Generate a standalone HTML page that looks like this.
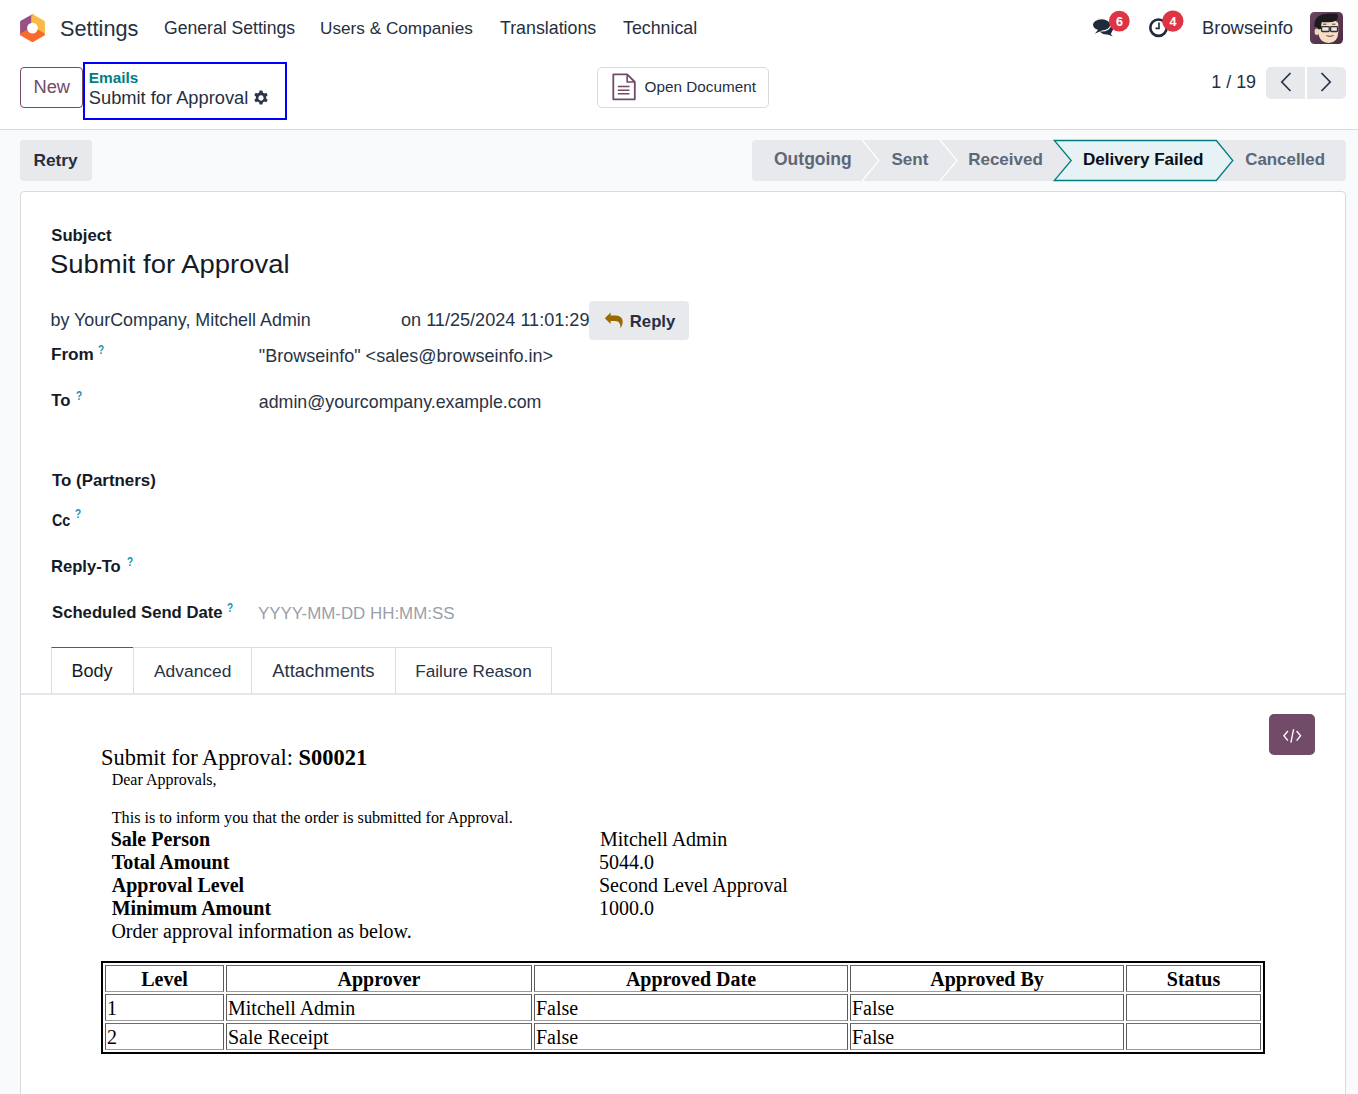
<!DOCTYPE html>
<html><head><meta charset="utf-8"><title>Emails - Submit for Approval</title>
<style>
html,body{margin:0;padding:0}
body{width:1358px;height:1094px;overflow:hidden;position:relative;background:#f9fafb;font-family:"Liberation Sans",sans-serif}
.t{position:absolute;white-space:pre;line-height:normal}
.r{position:absolute;box-sizing:border-box}
svg{position:absolute;overflow:visible}
table th,table td{border:1px solid #5a5a5a;border-top-color:#6e6e6e;border-bottom-color:#9c9c9c;padding:2px 1px 0 1px;box-sizing:border-box;height:27px;line-height:normal;vertical-align:middle}
table th{text-align:center;font-weight:700}
table td{text-align:left}
</style></head><body>
<div class="r" style="left:0;top:0;width:1358px;height:129px;background:#fff"></div>
<div class="r" style="left:0;top:129px;width:1358px;height:1px;background:#d9dadf"></div>
<!-- logo -->
<svg style="left:0;top:0" width="60" height="50" viewBox="0 0 60 50">
  <g stroke-linejoin="round" stroke-width="2.6">
  <path d="M32.5 15.6 L21.4 22 L21.4 34.2 L32.5 28 Z" fill="#985184" stroke="#985184"/>
  <path d="M32.5 15.6 L43.6 22 L43.6 34.2 L32.5 28 Z" fill="#fbb945" stroke="#fbb945"/>
  <path d="M21.4 34.4 L32.5 40.8 L43.6 34.4 L32.5 28 Z" fill="#fa6a2b" stroke="#fa6a2b"/>
  </g>
  <circle cx="32.5" cy="28.1" r="5.4" fill="#fff"/>
</svg>
<!-- chat icon -->
<svg style="left:0;top:0" width="1358" height="50" viewBox="0 0 1358 50">
  <path d="M1097.5 25 Q1103 20.5 1111 21.5 Q1116 23 1114 29 Q1112.5 32 1111.5 34 L1114.8 37.5 L1107.2 35 Q1101 35.2 1099 31 Z" fill="#1f2a3a" stroke="#fff" stroke-width="1.2"/>
  <ellipse cx="1101.6" cy="24.8" rx="9.2" ry="6.2" fill="#1f2a3a" stroke="#fff" stroke-width="1.2"/>
  <path d="M1094.8 33.8 L1098.5 29.2 L1102 30.5 Z" fill="#1f2a3a"/>
  <circle cx="1119.3" cy="21.1" r="10.4" fill="#de3545"/>
  <circle cx="1158.5" cy="27.7" r="8.2" fill="none" stroke="#1f2a3a" stroke-width="2.6"/>
  <path d="M1159 22.5 L1159 28.4 L1155.5 28.4" fill="none" stroke="#1f2a3a" stroke-width="1.6"/>
  <circle cx="1172.9" cy="21.1" r="10.6" fill="#de3545"/>
</svg>
<!-- avatar -->
<svg style="left:1310px;top:12px" width="33" height="32" viewBox="0 0 33 32">
  <defs><linearGradient id="av" x1="0" y1="0" x2="1" y2="1"><stop offset="0" stop-color="#6b4563"/><stop offset="1" stop-color="#4b2b42"/></linearGradient>
  <clipPath id="avc"><rect x="0" y="0" width="33" height="32" rx="4.5"/></clipPath></defs>
  <rect x="0" y="0" width="33" height="32" rx="4.5" fill="url(#av)"/>
  <g clip-path="url(#avc)">
  <ellipse cx="6.8" cy="19.8" rx="2.2" ry="3.3" fill="#f4d3b6"/>
  <path d="M8 9 Q9 7 18 7.5 Q28 8 28.3 12 L28.3 20 Q28 30.5 19 31 Q11 31 9 24 Q7.5 19 8 9 Z" fill="#f8ddc5"/>
  <path d="M4.3 15 Q3.8 5 12 2.6 Q20 1 27.2 1.8 Q28.5 4 27.5 7 Q26 10 19 10.2 Q13 10.4 11.8 10 Q11 13 11 17 L8.6 17.5 Q7.6 14 4.3 15 Z" fill="#1b1b1d"/>
  <path d="M13 12.2 h3.5 M22.2 12.2 h3.2" stroke="#3a302c" stroke-width="0.9"/>
  <rect x="11.6" y="14.6" width="7.6" height="4.9" rx="0.7" fill="#efe6e2" stroke="#333" stroke-width="1.3"/>
  <rect x="20.6" y="14.6" width="6.9" height="4.9" rx="0.7" fill="#efe6e2" stroke="#333" stroke-width="1.3"/>
  <path d="M16.3 23.6 Q20 25.6 23.8 23.4" fill="#b99" stroke="#6e5f5f" stroke-width="1"/>
  </g>
</svg>
<!-- New button -->
<div class="r" style="left:20px;top:67px;width:63px;height:41px;border:1px solid #714b67;border-radius:4px;background:#fff"></div>
<!-- breadcrumb highlight box -->
<div class="r" style="left:83px;top:62px;width:204px;height:58px;border:2px solid #0000ff"></div>
<!-- gear -->
<svg style="left:253px;top:90px" width="16" height="16" viewBox="0 0 16 16">
  <g fill="#2b3547">
  <path d="M6.6 0.5 h2.8 l0.4 2.1 a5.6 5.6 0 0 1 1.5 0.9 l2-0.7 l1.4 2.4 l-1.6 1.4 a5.6 5.6 0 0 1 0 1.8 l1.6 1.4 l-1.4 2.4 l-2-0.7 a5.6 5.6 0 0 1 -1.5 0.9 l-0.4 2.1 h-2.8 l-0.4-2.1 a5.6 5.6 0 0 1 -1.5-0.9 l-2 0.7 l-1.4-2.4 l1.6-1.4 a5.6 5.6 0 0 1 0-1.8 l-1.6-1.4 l1.4-2.4 l2 0.7 a5.6 5.6 0 0 1 1.5-0.9 z M8 5.3 a2.7 2.7 0 1 0 0.001 0 z" fill-rule="evenodd"/>
  </g>
</svg>
<!-- Open Document button -->
<div class="r" style="left:597px;top:67px;width:172px;height:41px;border:1px solid #d8dadd;border-radius:5px;background:#fff"></div>
<svg style="left:0;top:0" width="1358" height="130" viewBox="0 0 1358 130">
  <path d="M613.3 74.4 L627.2 74.4 L634.8 82 L634.8 99.3 L613.3 99.3 Z" fill="none" stroke="#714b67" stroke-width="1.8" stroke-linejoin="round"/>
  <path d="M627.2 74.4 L627.2 82 L634.8 82" fill="none" stroke="#714b67" stroke-width="1.6"/>
  <path d="M617.8 86.5 H629.5 M617.8 90.2 H629.5 M617.8 93.8 H629.5" stroke="#714b67" stroke-width="1.5"/>
</svg>
<!-- pager -->
<div class="r" style="left:1266px;top:67px;width:39px;height:32px;background:#e7e9ed;border-radius:5px 0 0 5px"></div>
<div class="r" style="left:1307px;top:67px;width:39px;height:32px;background:#e7e9ed;border-radius:0 5px 5px 0"></div>
<svg style="left:0;top:0" width="1358" height="130" viewBox="0 0 1358 130">
  <path d="M1290.5 73 L1281.8 82 L1290.5 91" fill="none" stroke="#283548" stroke-width="1.7"/>
  <path d="M1321.5 73 L1330.2 82 L1321.5 91" fill="none" stroke="#283548" stroke-width="1.7"/>
</svg>
<!-- Retry -->
<div class="r" style="left:20px;top:140px;width:72px;height:41px;background:#e7e9ed;border-radius:4px"></div>
<!-- status bar -->
<svg style="left:0;top:0" width="1358" height="200" viewBox="0 0 1358 200">
  <path d="M756 140 H1342 Q1346 140 1346 144 V177 Q1346 181 1342 181 H756 Q752 181 752 177 V144 Q752 140 756 140 Z" fill="#e7e9ed"/>
  <path d="M862 140 L879 160.5 L862 181" fill="none" stroke="#fff" stroke-width="1.2"/>
  <path d="M940 140 L957 160.5 L940 181" fill="none" stroke="#fff" stroke-width="1.2"/>
  <path d="M1054.3 140.5 L1216.3 140.5 L1232.8 160.5 L1216.3 180.5 L1054.3 180.5 L1071.2 160.5 Z" fill="#e6f2f3" stroke="#017e84" stroke-width="1.3"/>
</svg>
<!-- sheet -->
<div class="r" style="left:20px;top:191px;width:1326px;height:1000px;background:#fff;border:1px solid #d8dadd;border-radius:4px"></div>
<!-- reply button -->
<div class="r" style="left:589px;top:301px;width:100px;height:39px;background:#e7e9ed;border-radius:4px"></div>
<svg style="left:0;top:0" width="700" height="400" viewBox="0 0 700 400">
  <path d="M604.8 318.3 L610.6 312.6 L610.6 315.6 L615.5 315.6 C620.5 315.6 623 318.5 622.7 322.5 C622.4 325 621.4 327 620.4 328.3 C620.7 324.5 619.5 321.1 615 321.1 L610.6 321.1 L610.6 324 Z" fill="#9a6a00"/>
</svg>
<!-- tabs -->
<div class="r" style="left:51px;top:647px;width:83px;height:48px;border:1px solid #dcdde1;border-bottom:0;border-top-color:#714b67"></div>
<div class="r" style="left:133px;top:647px;width:119px;height:48px;border:1px solid #dcdde1;border-bottom:0"></div>
<div class="r" style="left:251px;top:647px;width:145px;height:48px;border:1px solid #dcdde1;border-bottom:0"></div>
<div class="r" style="left:395px;top:647px;width:157px;height:48px;border:1px solid #dcdde1;border-bottom:0"></div>
<div class="r" style="left:21px;top:693px;width:1324px;height:2px;background:#e5e7eb"></div>
<!-- code view button -->
<div class="r" style="left:1269px;top:714px;width:46px;height:41px;background:#714b67;border-radius:5px"></div>
<svg style="left:0;top:0" width="1358" height="800" viewBox="0 0 1358 800">
  <path d="M1287.9 731 L1283.9 735.8 L1287.9 740.6 M1296.6 731 L1300.6 735.8 L1296.6 740.6 M1293.6 729.2 L1290.9 742.6" fill="none" stroke="#fff" stroke-width="1.35"/>
</svg>


<div class="t" style="left:60.00px;top:16.00px;font-family:'Liberation Sans',sans-serif;font-weight:400;font-size:21.7px;color:#252f3f;">Settings</div>
<div class="t" style="left:164.00px;top:18.00px;font-family:'Liberation Sans',sans-serif;font-weight:400;font-size:17.6px;color:#252f3f;">General Settings</div>
<div class="t" style="left:320.00px;top:18.00px;font-family:'Liberation Sans',sans-serif;font-weight:400;font-size:17.2px;color:#252f3f;">Users &amp; Companies</div>
<div class="t" style="left:500.00px;top:18.00px;font-family:'Liberation Sans',sans-serif;font-weight:400;font-size:17.8px;color:#252f3f;">Translations</div>
<div class="t" style="left:623.00px;top:18.00px;font-family:'Liberation Sans',sans-serif;font-weight:400;font-size:17.8px;color:#252f3f;">Technical</div>
<div class="t" style="left:1202.00px;top:16.70px;font-family:'Liberation Sans',sans-serif;font-weight:400;font-size:18.4px;color:#252f3f;">Browseinfo</div>
<div class="t" style="left:33.50px;top:76.00px;font-family:'Liberation Sans',sans-serif;font-weight:400;font-size:18.3px;color:#714b67;">New</div>
<div class="t" style="left:88.80px;top:68.80px;font-family:'Liberation Sans',sans-serif;font-weight:700;font-size:15.4px;color:#017e84;">Emails</div>
<div class="t" style="left:88.80px;top:86.80px;font-family:'Liberation Sans',sans-serif;font-weight:400;font-size:18.3px;color:#252f3f;">Submit for Approval</div>
<div class="t" style="left:644.60px;top:78.00px;font-family:'Liberation Sans',sans-serif;font-weight:400;font-size:15.3px;color:#252f3f;">Open Document</div>
<div class="t" style="left:1211.30px;top:72.20px;font-family:'Liberation Sans',sans-serif;font-weight:400;font-size:17.9px;color:#252f3f;">1 / 19</div>
<div class="t" style="left:33.50px;top:150.00px;font-family:'Liberation Sans',sans-serif;font-weight:700;font-size:17.3px;color:#252f3f;">Retry</div>
<div class="t" style="left:774.00px;top:149.30px;font-family:'Liberation Sans',sans-serif;font-weight:700;font-size:17.5px;color:#5d6775;">Outgoing</div>
<div class="t" style="left:891.50px;top:150.30px;font-family:'Liberation Sans',sans-serif;font-weight:700;font-size:17.0px;color:#5d6775;">Sent</div>
<div class="t" style="left:968.20px;top:150.30px;font-family:'Liberation Sans',sans-serif;font-weight:700;font-size:17.0px;color:#5d6775;">Received</div>
<div class="t" style="left:1082.90px;top:150.30px;font-family:'Liberation Sans',sans-serif;font-weight:700;font-size:17.1px;color:#0b0f17;">Delivery Failed</div>
<div class="t" style="left:1245.20px;top:150.30px;font-family:'Liberation Sans',sans-serif;font-weight:700;font-size:16.9px;color:#5d6775;">Cancelled</div>
<div class="t" style="left:51.30px;top:225.80px;font-family:'Liberation Sans',sans-serif;font-weight:700;font-size:16.7px;color:#151b26;">Subject</div>
<div class="t" style="left:50.21px;top:250.40px;font-family:'Liberation Sans',sans-serif;font-weight:400;font-size:25.3px;color:#151b26;transform:scaleX(1.0850);transform-origin:0 0;">Submit for Approval</div>
<div class="t" style="left:50.50px;top:309.50px;font-family:'Liberation Sans',sans-serif;font-weight:400;font-size:17.9px;color:#283345;">by YourCompany, Mitchell Admin</div>
<div class="t" style="left:401.00px;top:309.80px;font-family:'Liberation Sans',sans-serif;font-weight:400;font-size:18.1px;color:#283345;">on 11/25/2024 11:01:29</div>
<div class="t" style="left:629.80px;top:312.00px;font-family:'Liberation Sans',sans-serif;font-weight:700;font-size:16.7px;color:#252f3f;">Reply</div>
<div class="t" style="left:50.90px;top:344.00px;font-family:'Liberation Sans',sans-serif;font-weight:700;font-size:17.2px;color:#151b26;">From</div>
<div class="t" style="left:258.80px;top:345.90px;font-family:'Liberation Sans',sans-serif;font-weight:400;font-size:18.0px;color:#283345;">"Browseinfo" &lt;sales@browseinfo.in&gt;</div>
<div class="t" style="left:51.20px;top:390.80px;font-family:'Liberation Sans',sans-serif;font-weight:700;font-size:16.7px;color:#151b26;">To</div>
<div class="t" style="left:258.80px;top:392.00px;font-family:'Liberation Sans',sans-serif;font-weight:400;font-size:17.8px;color:#283345;">admin@yourcompany.example.com</div>
<div class="t" style="left:52.00px;top:471.00px;font-family:'Liberation Sans',sans-serif;font-weight:700;font-size:16.9px;color:#151b26;">To (Partners)</div>
<div class="t" style="left:52.00px;top:510.50px;font-family:'Liberation Sans',sans-serif;font-weight:700;font-size:16.7px;color:#151b26;transform:scaleX(.86);transform-origin:0 0;">Cc</div>
<div class="t" style="left:51.00px;top:556.80px;font-family:'Liberation Sans',sans-serif;font-weight:700;font-size:16.6px;color:#151b26;">Reply-To</div>
<div class="t" style="left:52.00px;top:602.80px;font-family:'Liberation Sans',sans-serif;font-weight:700;font-size:16.7px;color:#151b26;">Scheduled Send Date</div>
<div class="t" style="left:258.00px;top:603.80px;font-family:'Liberation Sans',sans-serif;font-weight:400;font-size:16.9px;color:#9aa0a8;">YYYY-MM-DD HH:MM:SS</div>
<div class="t" style="left:1116.00px;top:15.00px;font-family:'Liberation Sans',sans-serif;font-weight:700;font-size:12.6px;color:#fff;">6</div>
<div class="t" style="left:1169.60px;top:15.00px;font-family:'Liberation Sans',sans-serif;font-weight:700;font-size:12.6px;color:#fff;">4</div>
<div class="t" style="left:71.60px;top:660.60px;font-family:'Liberation Sans',sans-serif;font-weight:400;font-size:18.0px;color:#151b26;">Body</div>
<div class="t" style="left:154.00px;top:660.60px;font-family:'Liberation Sans',sans-serif;font-weight:400;font-size:17.4px;color:#283345;">Advanced</div>
<div class="t" style="left:272.30px;top:659.60px;font-family:'Liberation Sans',sans-serif;font-weight:400;font-size:18.4px;color:#283345;">Attachments</div>
<div class="t" style="left:415.20px;top:660.60px;font-family:'Liberation Sans',sans-serif;font-weight:400;font-size:17.2px;color:#283345;">Failure Reason</div>
<div class="t" style="left:98.20px;top:343.00px;font-family:'Liberation Sans',sans-serif;font-weight:700;font-size:12.2px;color:#1a8fb5;transform:scaleX(.82);transform-origin:0 0;">?</div>
<div class="t" style="left:75.90px;top:389.00px;font-family:'Liberation Sans',sans-serif;font-weight:700;font-size:12.2px;color:#1a8fb5;transform:scaleX(.82);transform-origin:0 0;">?</div>
<div class="t" style="left:75.30px;top:507.40px;font-family:'Liberation Sans',sans-serif;font-weight:700;font-size:12.2px;color:#1a8fb5;transform:scaleX(.82);transform-origin:0 0;">?</div>
<div class="t" style="left:126.50px;top:554.80px;font-family:'Liberation Sans',sans-serif;font-weight:700;font-size:12.2px;color:#1a8fb5;transform:scaleX(.82);transform-origin:0 0;">?</div>
<div class="t" style="left:227.00px;top:600.80px;font-family:'Liberation Sans',sans-serif;font-weight:700;font-size:12.2px;color:#1a8fb5;transform:scaleX(.82);transform-origin:0 0;">?</div>
<div class="t" style="left:101.00px;top:744.80px;font-family:'Liberation Serif',serif;font-weight:400;font-size:22.45px;color:#000;">Submit for Approval: <b>S00021</b></div>
<div class="t" style="left:111.70px;top:771.20px;font-family:'Liberation Serif',serif;font-weight:400;font-size:16px;color:#000;">Dear Approvals,</div>
<div class="t" style="left:111.70px;top:809.10px;font-family:'Liberation Serif',serif;font-weight:400;font-size:16.2px;color:#000;">This is to inform you that the order is submitted for Approval.</div>
<div class="t" style="left:110.70px;top:827.60px;font-family:'Liberation Serif',serif;font-weight:700;font-size:20px;color:#000;">Sale Person</div>
<div class="t" style="left:600.00px;top:827.60px;font-family:'Liberation Serif',serif;font-weight:400;font-size:20px;color:#000;">Mitchell Admin</div>
<div class="t" style="left:111.70px;top:850.60px;font-family:'Liberation Serif',serif;font-weight:700;font-size:20px;color:#000;">Total Amount</div>
<div class="t" style="left:599.00px;top:850.60px;font-family:'Liberation Serif',serif;font-weight:400;font-size:20px;color:#000;">5044.0</div>
<div class="t" style="left:111.70px;top:873.60px;font-family:'Liberation Serif',serif;font-weight:700;font-size:20px;color:#000;">Approval Level</div>
<div class="t" style="left:599.00px;top:873.60px;font-family:'Liberation Serif',serif;font-weight:400;font-size:20px;color:#000;">Second Level Approval</div>
<div class="t" style="left:111.70px;top:896.60px;font-family:'Liberation Serif',serif;font-weight:700;font-size:20px;color:#000;">Minimum Amount</div>
<div class="t" style="left:599.00px;top:896.60px;font-family:'Liberation Serif',serif;font-weight:400;font-size:20px;color:#000;">1000.0</div>
<div class="t" style="left:111.40px;top:920.00px;font-family:'Liberation Serif',serif;font-weight:400;font-size:20px;color:#000;">Order approval information as below.</div>
<table style="position:absolute;left:101px;top:961px;border-collapse:separate;border-spacing:2px;border:2px solid #000;font-family:'Liberation Serif',serif;font-size:20px;color:#000;table-layout:fixed;width:1164px">
<colgroup><col style="width:119px"><col style="width:306px"><col style="width:314px"><col style="width:274px"><col style="width:135px"></colgroup>
<tr style="height:27px"><th>Level</th><th>Approver</th><th>Approved Date</th><th>Approved By</th><th>Status</th></tr>
<tr style="height:27px"><td>1</td><td>Mitchell Admin</td><td>False</td><td>False</td><td></td></tr>
<tr style="height:27px"><td>2</td><td>Sale Receipt</td><td>False</td><td>False</td><td></td></tr>
</table>

</body></html>
